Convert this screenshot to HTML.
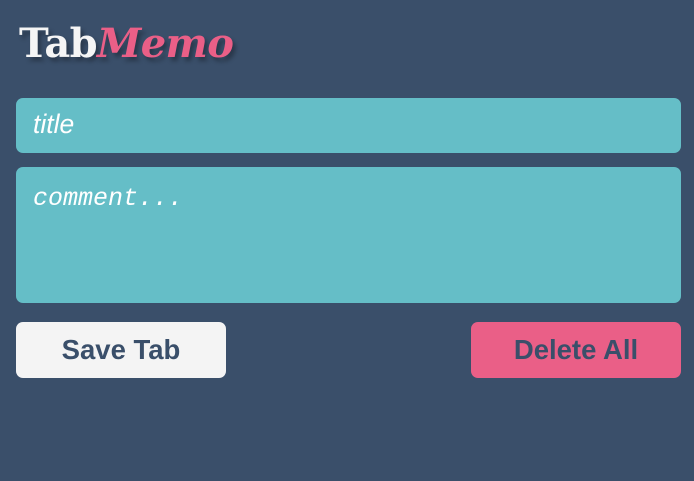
<!DOCTYPE html>
<html><head><style>
body{margin:0;width:694px;height:481px;background:#3a4f6a;font-family:"Liberation Sans",sans-serif;position:relative;overflow:hidden}
.logo{position:absolute;left:19px;top:18px;font-family:"DejaVu Serif","Liberation Serif",serif;font-weight:bold;font-size:40px;letter-spacing:-0.6px;line-height:52px;text-shadow:3px 4px 4px rgba(0,0,0,.3)}
.logo .a{color:#f5f5f5}.logo .b{color:#ea5f87;font-style:italic}
.in{position:absolute;left:16px;width:665px;background:#65bec7;border-radius:7px;color:#fff;font-style:italic}
.t{top:98px;height:55px;font-size:26.5px;line-height:52px;box-sizing:border-box;padding-left:17px}
.c{top:167px;height:136px;font-family:"Liberation Mono",monospace;font-size:25px;box-sizing:border-box;padding:17px 17px}
.btn{position:absolute;top:322px;height:56px;border-radius:7px;font-weight:bold;font-size:27.5px;color:#3a4f6a;text-align:center;line-height:56px}
</style></head><body>
<div class="logo"><span class="a">Tab</span><span class="b">Memo</span></div>
<div class="in t">title</div>
<div class="in c">comment...</div>
<div class="btn" style="left:16px;width:210px;background:#f4f4f4">Save Tab</div>
<div class="btn" style="left:471px;width:210px;background:#ea5f87">Delete All</div>
</body></html>
